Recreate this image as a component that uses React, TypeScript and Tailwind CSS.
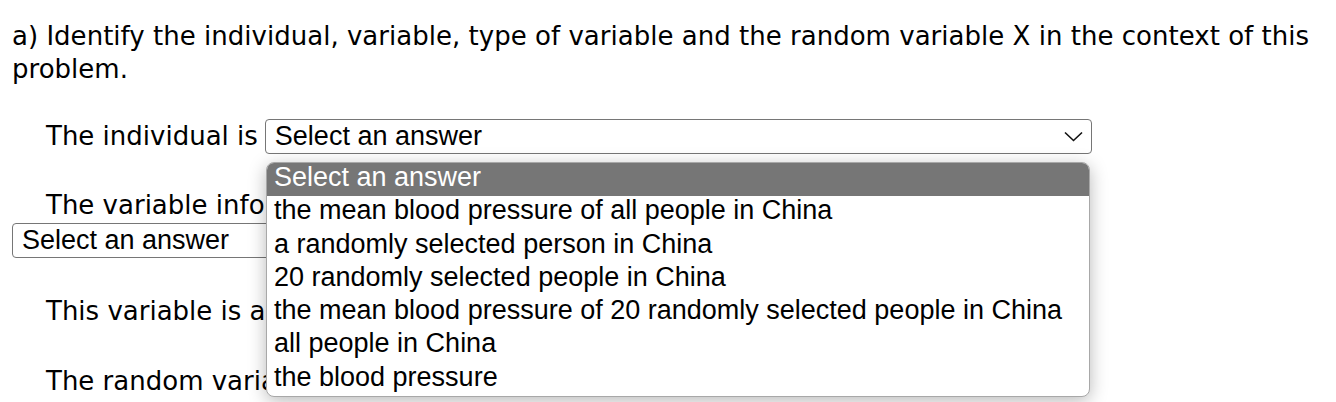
import React from 'react';

const OPTIONS = [
  'Select an answer',
  'the mean blood pressure of all people in China',
  'a randomly selected person in China',
  '20 randomly selected people in China',
  'the mean blood pressure of 20 randomly selected people in China',
  'all people in China',
  'the blood pressure',
];

const Chevron = () => (
  <svg width="19" height="11" viewBox="0 0 19 11" fill="none" className="shrink-0">
    <path d="M1 1.5 L9.5 9.5 L18 1.5" stroke="#111" strokeWidth="1.6" />
  </svg>
);

const FakeSelect: React.FC<{ width: number; showChevron?: boolean }> = ({ width, showChevron = true }) => (
  <span
    className="inline-flex items-center justify-between h-[35px] border border-[#767676] rounded-[4px] bg-white pl-[9px] pr-[8px] align-middle indent-0 font-['Liberation_Sans',Arial,sans-serif] text-[27px] leading-none text-black"
    style={{ width }}
  >
    <span>Select an answer</span>
    {showChevron && <Chevron />}
  </span>
);

export default function App() {
  return (
    <div className="relative w-[1336px] h-[402px] overflow-hidden bg-white text-black font-['DejaVu_Sans',Verdana,sans-serif] text-[26px] leading-[33px]">
      <div className="px-[12px] pt-[20px]">
        <p className="tracking-[0.02px]">
          a) Identify the individual, variable, type of variable and the random variable X in the context of this
          problem.
        </p>

        <div className="mt-[33px] flex items-center pl-[34px] gap-[7px]">
          <span>The individual is</span>
          <FakeSelect width={827} />
        </div>

        <p className="mt-[35px] indent-[34px]">
          The variable information being gathered is
        </p>
        <div className="mt-[1px]">
          <FakeSelect width={420} />
        </div>

        <div className="mt-[35px] flex items-center pl-[34px] gap-[8px] h-[36px]">
          <span>This variable is a</span>
          <FakeSelect width={420} />
        </div>

        <div className="mt-[34px] flex items-center pl-[34px] gap-[8px] h-[36px]">
          <span>The random variable X is</span>
        </div>
      </div>

      {/* open dropdown list */}
      <div className="absolute left-[266px] top-[162px] w-[824px] h-[235px] bg-white border border-[#a8a8a8] rounded-[8px] shadow-[0_4px_18px_rgba(0,0,0,0.28)] overflow-hidden font-['Liberation_Sans',Arial,sans-serif] text-[27px]">
        {OPTIONS.map((o, i) => (
          <div
            key={o}
            className={`h-[33.3px] leading-[29px] pl-[7px] whitespace-nowrap ${i === 0 ? 'bg-[#767676] text-white' : 'text-black'}`}
          >
            {o}
          </div>
        ))}
      </div>
    </div>
  );
}
